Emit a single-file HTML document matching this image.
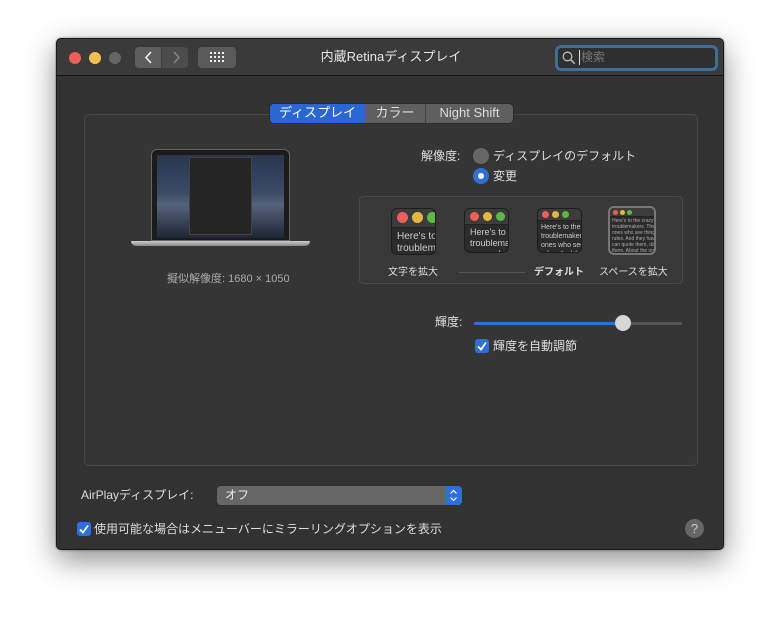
<!DOCTYPE html>
<html><head><meta charset="utf-8"><style>
*{box-sizing:border-box;margin:0;padding:0}
body{width:780px;height:625px;background:#fff;font-family:"Liberation Sans","Noto Sans CJK JP",sans-serif;position:relative;overflow:hidden;color:#ddd;font-size:12px}
.win{position:absolute;left:56px;top:38px;width:668px;height:512px;background:#323232;border-radius:5px;border:1px solid #1a1a1a;box-shadow:0 10px 30px rgba(0,0,0,.45),0 0 2px rgba(0,0,0,.5);overflow:hidden}
.tb{position:absolute;left:0;top:0;width:100%;height:37px;background:#3a3a3a;border-bottom:1px solid #121212}
.a{position:absolute}
.dot{position:absolute;width:12px;height:12px;border-radius:50%;top:13px}
.btn{position:absolute;background:#5a5a5a;border-radius:4px}
.t{position:absolute;white-space:nowrap;line-height:1.1}
.thumb{position:absolute;background:#2b2b2b;border-radius:6px;border:1px solid #1c1c1c;overflow:hidden;font-size:9px;color:#ccc;line-height:11px}
.thumb .bar{height:17px;background:#3c3c3c;border-bottom:1px solid #222;position:relative}
.thumb .bar i{position:absolute;border-radius:50%}
</style></head><body>
<div class="win">
 <div class="tb">
  <div class="dot" style="left:12px;background:#ec5f57"></div>
  <div class="dot" style="left:32px;background:#f4bf4f"></div>
  <div class="dot" style="left:52px;background:#656565"></div>
  <div class="btn" style="left:78px;top:8px;width:26px;height:21px;border-radius:4px 0 0 4px;background:#5e5e5e"></div>
  <div class="btn" style="left:105px;top:8px;width:26px;height:21px;border-radius:0 4px 4px 0;background:#4c4c4c"></div>
  <svg class="a" style="left:78px;top:8px" width="53" height="21"><path d="M16 5l-5 5.5 5 5.5" stroke="#eee" stroke-width="1.6" fill="none"/><path d="M39 5l5 5.5-5 5.5" stroke="#888" stroke-width="1.4" fill="none"/></svg>
  <div class="btn" style="left:141px;top:8px;width:38px;height:21px"></div>
  <svg class="a" style="left:153px;top:13px" width="14" height="11"><g fill="#eee"><rect x="0" y="0" width="2" height="2"/><rect x="4" y="0" width="2" height="2"/><rect x="8" y="0" width="2" height="2"/><rect x="12" y="0" width="2" height="2"/><rect x="0" y="4" width="2" height="2"/><rect x="4" y="4" width="2" height="2"/><rect x="8" y="4" width="2" height="2"/><rect x="12" y="4" width="2" height="2"/><rect x="0" y="8" width="2" height="2"/><rect x="4" y="8" width="2" height="2"/><rect x="8" y="8" width="2" height="2"/><rect x="12" y="8" width="2" height="2"/></g></svg>
  <div class="t" style="left:0;width:668px;text-align:center;top:11px;font-size:13px;color:#e6e6e6">内蔵Retinaディスプレイ</div>
  <div class="a" style="left:498px;top:6px;width:163px;height:26px;border:3px solid #3f6d9a;border-radius:6px;background:#2f2f2f"></div>
  <svg class="a" style="left:505px;top:12px" width="14" height="14"><circle cx="5.5" cy="5.5" r="4.3" stroke="#bbb" stroke-width="1.3" fill="none"/><path d="M8.7 8.7l4 4" stroke="#bbb" stroke-width="1.5"/></svg>
  <div class="a" style="left:522px;top:11px;width:1px;height:15px;background:#ddd"></div>
  <div class="t" style="left:524px;top:12px;font-size:12px;color:#777">検索</div>
 </div>
 <div class="a" style="left:27px;top:75px;width:614px;height:352px;border:1px solid #474747;border-radius:5px;background:#353535"></div>
 <div class="a" style="left:213px;top:65px;width:243px;height:19px;border-radius:4px;background:#5f5f5f;box-shadow:0 0 0 .5px #222"></div>
 <div class="a" style="left:213px;top:65px;width:95px;height:19px;border-radius:4px 0 0 4px;background:#2a67d2"></div>
 <div class="a" style="left:368px;top:65px;width:1px;height:19px;background:#444"></div>
 <div class="t" style="left:213px;width:95px;text-align:center;top:67px;font-size:13px;color:#fff">ディスプレイ</div>
 <div class="t" style="left:308px;width:60px;text-align:center;top:67px;font-size:13px;color:#ddd">カラー</div>
 <div class="t" style="left:369px;width:87px;text-align:center;top:67px;font-size:13px;color:#ddd">Night Shift</div>
 <div class="a" style="left:94px;top:110px;width:139px;height:92px;background:#1b1b1b;border-radius:6px 6px 0 0;border:1px solid #666"></div>
 <div class="a" style="left:100px;top:116px;width:127px;height:83px;background:linear-gradient(180deg,#2a3650 0%,#3b4a66 45%,#55627a 60%,#1e2638 100%)"></div>
 <div class="a" style="left:132px;top:118px;width:63px;height:78px;background:#252525;border:1px solid #444"></div>
 <div class="a" style="left:74px;top:202px;width:179px;height:5px;background:linear-gradient(#ccc,#888);border-radius:0 0 8px 8px"></div>
 <div class="t" style="left:110px;top:234px;font-size:11px;color:#aaa">擬似解像度: 1680 × 1050</div>
 <div class="t" style="left:364px;top:111px;font-size:12px;color:#ddd">解像度:</div>
 <div class="a" style="left:416px;top:109px;width:16px;height:16px;border-radius:50%;background:#666"></div>
 <div class="t" style="left:436px;top:111px;font-size:12px;color:#ddd">ディスプレイのデフォルト</div>
 <div class="a" style="left:416px;top:129px;width:16px;height:16px;border-radius:50%;background:#2f6fd9"></div>
 <div class="a" style="left:421px;top:134px;width:6px;height:6px;border-radius:50%;background:#fff"></div>
 <div class="t" style="left:436px;top:131px;font-size:12px;color:#ddd">変更</div>
 <div class="a" style="left:302px;top:157px;width:324px;height:88px;border:1px solid #4a4a4a;border-radius:4px;background:#383838"></div>
 <div class="thumb" style="left:334px;top:169px;width:45px;height:47px"><div class="bar" style="height:19px"><i style="left:5px;top:3px;width:11px;height:11px;background:#ec5f57"></i><i style="left:20px;top:3px;width:11px;height:11px;background:#e2b843"></i><i style="left:35px;top:3px;width:11px;height:11px;background:#5cb946"></i></div><div style="padding:3px 5px;font-size:10px;line-height:12px;white-space:nowrap">Here's to<br>troublem</div></div>
 <div class="thumb" style="left:407px;top:169px;width:45px;height:45px"><div class="bar" style="height:16px"><i style="left:5px;top:3px;width:9px;height:9px;background:#ec5f57"></i><i style="left:18px;top:3px;width:9px;height:9px;background:#e2b843"></i><i style="left:31px;top:3px;width:9px;height:9px;background:#5cb946"></i></div><div style="padding:2px 5px;font-size:9px;line-height:11px;white-space:nowrap">Here's to t<br>troublema<br>ones who</div></div>
 <div class="thumb" style="left:480px;top:169px;width:45px;height:45px"><div class="bar" style="height:12px"><i style="left:4px;top:2px;width:7px;height:7px;background:#ec5f57"></i><i style="left:14px;top:2px;width:7px;height:7px;background:#e2b843"></i><i style="left:24px;top:2px;width:7px;height:7px;background:#5cb946"></i></div><div style="padding:2px 3px;font-size:7px;line-height:9px;white-space:nowrap">Here's to the cr<br>troublemakers.<br>ones who see t<br>rules. And they</div></div>
 <div class="thumb" style="left:551px;top:167px;width:48px;height:49px;border:2px solid #777"><div class="bar" style="height:9px"><i style="left:3px;top:2px;width:5px;height:5px;background:#ec5f57"></i><i style="left:10px;top:2px;width:5px;height:5px;background:#e2b843"></i><i style="left:17px;top:2px;width:5px;height:5px;background:#5cb946"></i></div><div style="padding:1px 2px;font-size:5px;line-height:6px;white-space:nowrap;color:#aaa">Here's to the crazy one<br>troublemakers. The rou<br>ones who see things di<br>rules. And they have no<br>can quote them, disagr<br>them. About the only th<br>Because they change th</div></div>
 <div class="t" style="left:331px;top:228px;font-size:10px;color:#ddd">文字を拡大</div>
 <div class="a" style="left:402px;top:233px;width:66px;height:1px;background:#555"></div>
 <div class="t" style="left:477px;top:228px;font-size:10px;color:#ddd;font-weight:bold">デフォルト</div>
 <div class="t" style="left:542px;top:228px;font-size:10px;color:#ddd">スペースを拡大</div>
 <div class="t" style="left:378px;top:277px;font-size:12px;color:#ddd">輝度:</div>
 <div class="a" style="left:417px;top:283px;width:208px;height:3px;border-radius:2px;background:#555"></div>
 <div class="a" style="left:417px;top:283px;width:150px;height:3px;border-radius:2px;background:#2f6fd9"></div>
 <div class="a" style="left:558px;top:276px;width:16px;height:16px;border-radius:50%;background:#d6d6d6"></div>
 <div class="a" style="left:418px;top:300px;width:14px;height:14px;border-radius:3px;background:#2f6fd9"></div>
 <svg class="a" style="left:418px;top:300px" width="14" height="14"><path d="M3 7.5l3 3 5-7" stroke="#fff" stroke-width="1.8" fill="none"/></svg>
 <div class="t" style="left:436px;top:301px;font-size:12px;color:#ddd">輝度を自動調節</div>
 <div class="t" style="left:24px;top:450px;font-size:12px;color:#ddd">AirPlayディスプレイ:</div>
 <div class="a" style="left:160px;top:447px;width:245px;height:19px;border-radius:4px;background:#666"></div>
 <div class="a" style="left:388px;top:447px;width:17px;height:19px;border-radius:0 4px 4px 0;background:#2f6fd9"></div>
 <svg class="a" style="left:388px;top:447px" width="17" height="19"><path d="M5.5 7.5l3-3 3 3M5.5 11.5l3 3 3-3" stroke="#fff" stroke-width="1.2" fill="none"/></svg>
 <div class="t" style="left:168px;top:450px;font-size:12px;color:#eee">オフ</div>
 <div class="a" style="left:20px;top:483px;width:14px;height:14px;border-radius:3px;background:#2f6fd9"></div>
 <svg class="a" style="left:20px;top:483px" width="14" height="14"><path d="M3 7.5l3 3 5-7" stroke="#fff" stroke-width="1.8" fill="none"/></svg>
 <div class="t" style="left:37px;top:484px;font-size:12px;color:#ddd">使用可能な場合はメニューバーにミラーリングオプションを表示</div>
 <div class="a" style="left:628px;top:480px;width:19px;height:19px;border-radius:50%;background:#666;color:#ccc;text-align:center;font-size:13px;line-height:19px">?</div>
</div>
</body></html>
